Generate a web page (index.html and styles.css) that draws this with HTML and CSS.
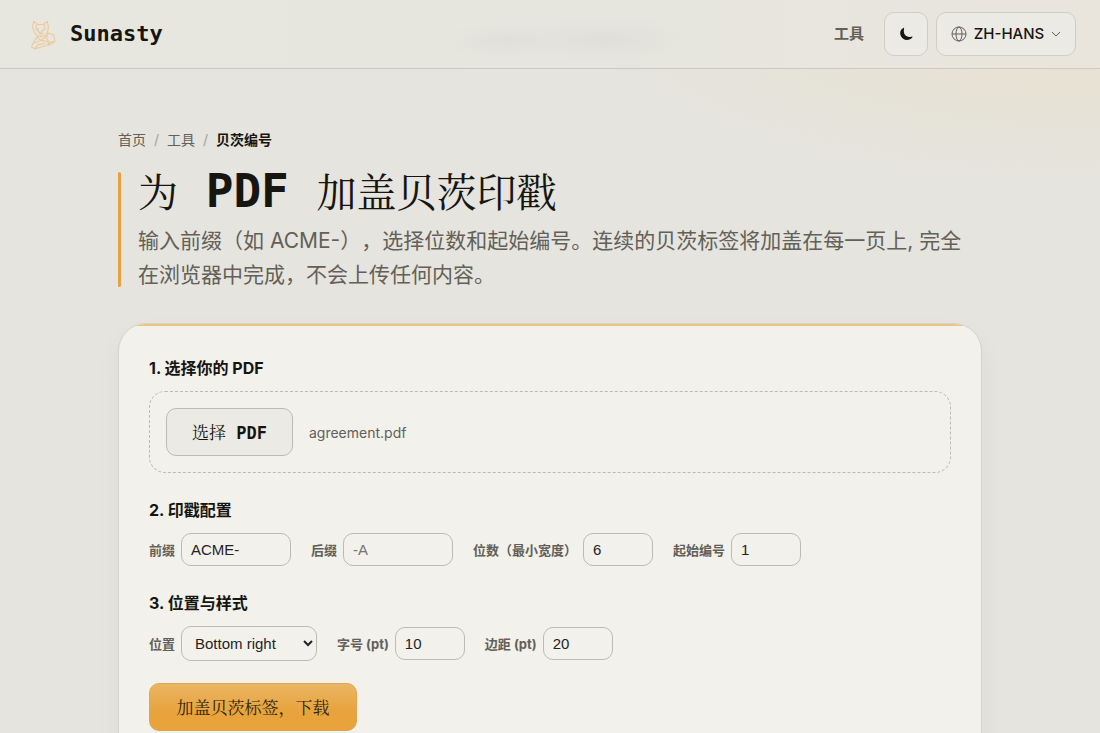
FILE: index.html
```html
<!DOCTYPE html>
<html lang="zh-Hans">
<head>
<meta charset="utf-8">
<meta name="viewport" content="width=device-width, initial-scale=1">
<title>贝茨编号 - Sunasty</title>
<link rel="stylesheet" href="styles.css">
</head>
<body>
<header class="site-header">
  <a class="brand" href="#">
    <svg class="brand-logo" viewBox="0 0 32 32" aria-hidden="true">
      <path d="M9 4l4 3h5l4-3 1 6-1 5-3 3h-6l-3-3-2-5zM12 11l2 1M20 11l-2 1M14 15l2 1 2-1M13 18l-3 4-3 6 3 2 7-2 9-3 3-2M12 19l4 3 5-4M8 25l8-3 6 1 2 4M23 15l5 2 1 6-5 3M23 15l-2 5 3 4 4-1M10 30l3-4 7-1M12 7l-1 4 4 4 5-4-1-4"/>
    </svg>
    <span>Sunasty</span>
  </a>
  <nav class="site-nav">
    <a class="nav-link" href="#">工具</a>
    <div class="nav-actions">
      <button class="theme-button" type="button" aria-label="切换深色模式">
        <svg viewBox="0 0 16 16" aria-hidden="true"><path d="M5 1C1.500 2.500.6 6.500 2 10c2 5 8.500 6.600 13 2.200.7-.8.300-1.500-.7-1.200C9 12.500 4.200 9 5.800 2c.200-.9-.1-1.300-.8-1z"/></svg>
      </button>
      <button class="lang-button" type="button">
        <svg class="globe" viewBox="0 0 16 16" aria-hidden="true"><circle cx="8" cy="8" r="7"/><ellipse cx="8" cy="8" rx="3" ry="7"/><path d="M1 8h14"/></svg>
        <span>ZH-HANS</span>
        <svg class="chevron" viewBox="0 0 10 10" aria-hidden="true"><path d="M1 3l4 4 4-4"/></svg>
      </button>
    </div>
  </nav>
</header>

<main class="page">
  <nav class="breadcrumb" aria-label="breadcrumb">
    <a href="#">首页</a><span class="sep">/</span><a href="#">工具</a><span class="sep">/</span><strong>贝茨编号</strong>
  </nav>

  <section class="hero">
    <h1>为<span class="mono"> PDF </span>加盖贝茨印戳</h1>
    <p>输入前缀（如 ACME-），选择位数和起始编号。连续的贝茨标签将加盖在每一页上, 完全在浏览器中完成，不会上传任何内容。</p>
  </section>

  <form class="card">
    <section class="step">
      <h2>1. 选择你的 PDF</h2>
      <div class="dropzone">
        <button class="file-button" type="button">选择<span class="mono"> PDF</span></button>
        <span class="file-name">agreement.pdf</span>
      </div>
    </section>

    <section class="step">
      <h2>2. 印戳配置</h2>
      <div class="fields">
        <label class="field">前缀 <input class="wide" type="text" value="ACME-"></label>
        <label class="field">后缀 <input class="wide" type="text" placeholder="-A"></label>
        <label class="field">位数（最小宽度） <input type="text" inputmode="numeric" value="6"></label>
        <label class="field">起始编号 <input type="text" inputmode="numeric" value="1"></label>
      </div>
    </section>

    <section class="step">
      <h2>3. 位置与样式</h2>
      <div class="fields">
        <label class="field">位置
          <select><option>Bottom right</option><option>Bottom left</option><option>Top right</option></select>
        </label>
        <label class="field">字号 (pt) <input type="text" inputmode="numeric" value="10"></label>
        <label class="field">边距 (pt) <input type="text" inputmode="numeric" value="20"></label>
      </div>
    </section>

    <button class="submit" type="submit">加盖贝茨标签，下载</button>
  </form>
</main>
</body>
</html>
```

FILE: styles.css
```css
:root {
  --ink: #161510;
  --muted: #626057;
  --line: #bdbab2;
  --accent: #e6a23c;
  --sans: Inter, "Noto Sans CJK SC", sans-serif;
  --mono: "DejaVu Sans Mono", "Noto Sans CJK SC", monospace;
  --serif: "Noto Serif CJK SC", "Noto Sans CJK SC", serif;
}

* { box-sizing: border-box; }

body {
  margin: 0;
  min-height: 100vh;
  color: var(--ink);
  font-family: var(--sans);
  background:
    radial-gradient(ellipse 560px 200px at 100% 0, #e7e1d0 0%, #e6e2d5 50%, transparent 100%),
    #e5e4df;
}

a { color: inherit; text-decoration: none; }
button { cursor: pointer; }

.site-header {
  display: flex;
  align-items: center;
  justify-content: space-between;
  height: 69px;
  padding: 0 24px;
  border-bottom: 1px solid #cbc9c0;
  background:
    radial-gradient(ellipse 70px 20px at 46% 60%, #e0dfda 0%, transparent 100%),
    radial-gradient(ellipse 90px 24px at 55% 58%, #dfded9 0%, transparent 100%),
    linear-gradient(90deg, #e8e7df 0%, #e7e6de 60%, #e9e5dd 100%);
}

.brand {
  display: flex;
  align-items: center;
  gap: 12px;
  font: bold 22px/32px var(--mono);
}

.brand-logo {
  width: 34px;
  height: 34px;
  fill: none;
  stroke: #ecc998;
  stroke-width: 1;
  stroke-linejoin: round;
}

.site-nav { display: flex; align-items: center; gap: 20px; }
.nav-link { color: var(--muted); font-size: 15px; font-weight: 700; line-height: 20px; }
.nav-actions { display: flex; gap: 8px; }

.theme-button,
.lang-button {
  display: flex;
  align-items: center;
  justify-content: center;
  height: 44px;
  border: 1px solid #d0cdc6;
  border-radius: 10px;
  background: #eceae4;
  color: var(--ink);
}

.theme-button { width: 44px; padding: 0; }
.theme-button svg { width: 14px; height: 14px; fill: var(--ink); }

.lang-button {
  gap: 7px;
  width: 140px;
  padding: 0;
  font: 500 15px/20px var(--sans);
}

.lang-button svg { fill: none; stroke: var(--muted); }
.globe { width: 16px; height: 16px; }
.chevron { width: 10px; height: 10px; }

.page {
  max-width: 912px;
  margin: 0 auto;
  padding: 61px 24px 32px;
}

.breadcrumb {
  display: flex;
  color: var(--muted);
  font-size: 14px;
  line-height: 20px;
}

.breadcrumb .sep { padding: 0 8px; color: #a4a198; }
.breadcrumb strong { color: var(--ink); }

.hero {
  position: relative;
  margin-top: 22px;
  padding-left: 20px;
}

.hero::before {
  content: "";
  position: absolute;
  inset: 0 auto 5px 0;
  width: 3px;
  border-radius: 2px;
  background: var(--accent);
}

.hero h1 {
  margin: 0 0 16px;
  font: 400 40px/36px var(--serif);
}

.hero .mono {
  font: bold 46px/1px var(--mono);
  white-space: pre;
}

.hero p {
  margin: 0;
  color: var(--muted);
  font-size: 21px;
  line-height: 34px;
  text-spacing-trim: space-all;
}

.card {
  position: relative;
  display: flex;
  flex-direction: column;
  gap: 25px;
  margin-top: 31px;
  padding: 32px 30px;
  border: 1px solid #d5d2ca;
  border-radius: 28px;
  background: #f2f1ec;
  box-shadow: 0 12px 24px rgba(60, 50, 30, 0.05);
  overflow: hidden;
}

.card::before {
  content: "";
  position: absolute;
  inset: 0 0 auto;
  height: 2px;
  background: #e9c485;
}

.step h2 {
  margin: 0 0 11px;
  font-size: 16px;
  font-weight: 700;
  line-height: 24px;
}

.dropzone {
  display: flex;
  align-items: center;
  gap: 16px;
  padding: 16px;
  border: 1px dashed var(--line);
  border-radius: 16px;
}

.file-button {
  height: 48px;
  padding: 0 25px;
  border: 1px solid var(--line);
  border-radius: 10px;
  background: #eceae4;
  color: var(--ink);
  font: 400 17px/24px var(--serif);
}

.file-button .mono { font-family: var(--mono); font-weight: 700; white-space: pre; }
.file-name { color: var(--muted); font-size: 14px; }

.fields { display: flex; flex-wrap: wrap; align-items: center; gap: 12px 20px; }

.field {
  display: flex;
  align-items: center;
  gap: 6px;
  color: var(--muted);
  font-size: 13px;
  font-weight: 700;
}

.field input,
.field select {
  width: 70px;
  height: 33px;
  padding: 0 9px;
  border: 1px solid var(--line);
  border-radius: 10px;
  background: #f2f1ec;
  color: #25231f;
  font: 15px/20px "Liberation Sans", sans-serif;
}

.field input.wide { width: 110px; }
.field input::placeholder { color: #77756f; }
.field select { width: 136px; height: 35px; }

.submit {
  align-self: flex-start;
  width: 208px;
  height: 48px;
  margin-top: -3px;
  padding: 0;
  border: 1px solid #dfa650;
  border-radius: 10px;
  background: linear-gradient(#ebb564, #e8a33c 60%);
  color: #2a1f0c;
  font: 400 17px/24px var(--serif);
}
```
